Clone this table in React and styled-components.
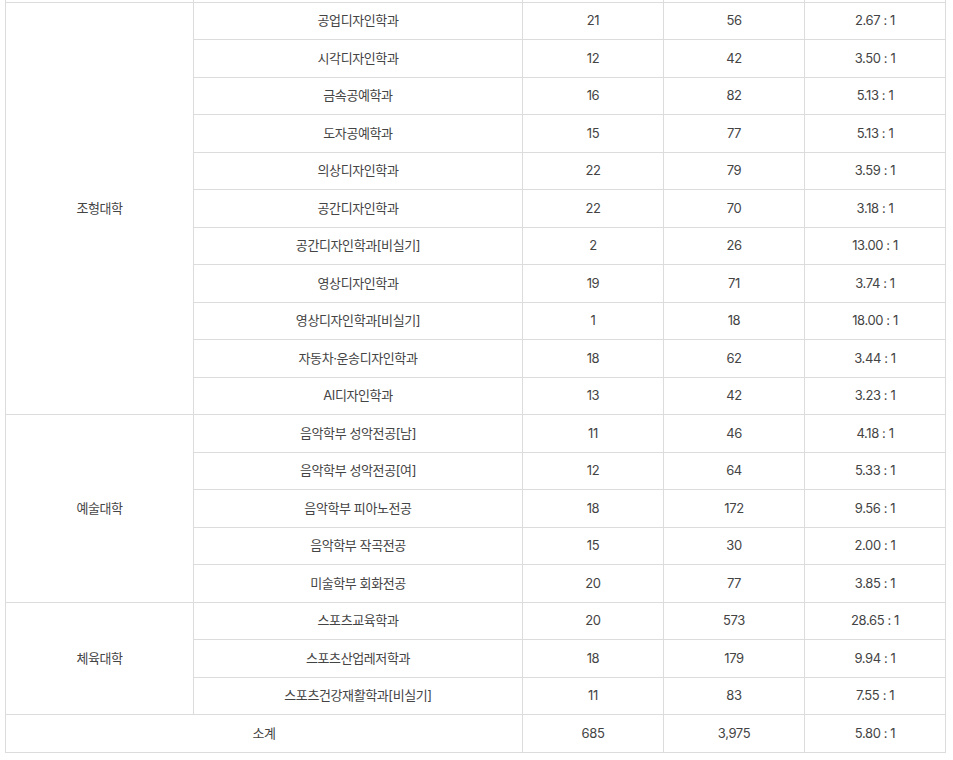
import React from "react";
import styled, { createGlobalStyle } from "styled-components";

const Global = createGlobalStyle`
  html, body { margin: 0; padding: 0; background: #fff; }
  body { font-family: Inter, "Noto Sans CJK KR", "Noto Sans", sans-serif; }
`;

const Viewport = styled.div`
  height: 760px;
  overflow: hidden;
  padding: 0 8px 0 5px;
`;

const Table = styled.table`
  width: 941px;
  margin-top: -36px;
  border-collapse: collapse;
  table-layout: fixed;
  color: #444;
  font-size: 13px;
  letter-spacing: -0.4px;
`;

const Cell = styled.td`
  height: 35.5px;
  padding: 0 0 1px;
  border: 1px solid #dcdcdc;
  text-align: center;
  vertical-align: middle;
  line-height: 16px;
`;

const groups = [
  {
    name: "조형대학",
    rows: [
      ["공업디자인학과", "21", "56", "2.67 : 1"],
      ["시각디자인학과", "12", "42", "3.50 : 1"],
      ["금속공예학과", "16", "82", "5.13 : 1"],
      ["도자공예학과", "15", "77", "5.13 : 1"],
      ["의상디자인학과", "22", "79", "3.59 : 1"],
      ["공간디자인학과", "22", "70", "3.18 : 1"],
      ["공간디자인학과[비실기]", "2", "26", "13.00 : 1"],
      ["영상디자인학과", "19", "71", "3.74 : 1"],
      ["영상디자인학과[비실기]", "1", "18", "18.00 : 1"],
      ["자동차·운송디자인학과", "18", "62", "3.44 : 1"],
      ["AI디자인학과", "13", "42", "3.23 : 1"],
    ],
  },
  {
    name: "예술대학",
    rows: [
      ["음악학부 성악전공[남]", "11", "46", "4.18 : 1"],
      ["음악학부 성악전공[여]", "12", "64", "5.33 : 1"],
      ["음악학부 피아노전공", "18", "172", "9.56 : 1"],
      ["음악학부 작곡전공", "15", "30", "2.00 : 1"],
      ["미술학부 회화전공", "20", "77", "3.85 : 1"],
    ],
  },
  {
    name: "체육대학",
    rows: [
      ["스포츠교육학과", "20", "573", "28.65 : 1"],
      ["스포츠산업레저학과", "18", "179", "9.94 : 1"],
      ["스포츠건강재활학과[비실기]", "11", "83", "7.55 : 1"],
    ],
  },
];

export default function App() {
  return (
    <>
      <Global />
      <Viewport>
        <Table>
          <colgroup>
            <col style={{ width: 188 }} />
            <col style={{ width: 329 }} />
            <col style={{ width: 141 }} />
            <col style={{ width: 141 }} />
            <col style={{ width: 141 }} />
          </colgroup>
          <tbody>
            <tr>
              <Cell />
              <Cell />
              <Cell />
              <Cell />
              <Cell />
            </tr>
            {groups.map((g) =>
              g.rows.map((r, i) => (
                <tr key={g.name + i}>
                  {i === 0 && <Cell rowSpan={g.rows.length}>{g.name}</Cell>}
                  {r.map((v, j) => (
                    <Cell key={j}>{v}</Cell>
                  ))}
                </tr>
              ))
            )}
            <tr>
              <Cell colSpan={2}>소계</Cell>
              <Cell>685</Cell>
              <Cell>3,975</Cell>
              <Cell>5.80 : 1</Cell>
            </tr>
          </tbody>
        </Table>
      </Viewport>
    </>
  );
}
